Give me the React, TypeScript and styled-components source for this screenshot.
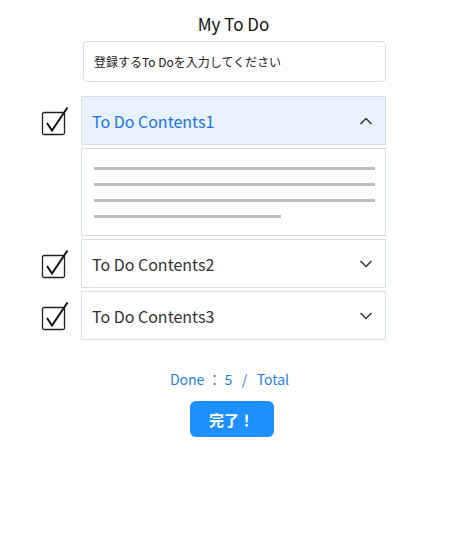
import React, { useState } from "react";
import styled, { createGlobalStyle } from "styled-components";

const GlobalStyle = createGlobalStyle`
    body {
        margin: 0;
        background: #fff;
        font-family: "Noto Sans CJK JP", "Noto Sans", sans-serif;
        color: #111;
    }
`;

const todos = [
    { id: 1, title: "To Do Contents1" },
    { id: 2, title: "To Do Contents2" },
    { id: 3, title: "To Do Contents3" },
];

function CheckIcon() {
    return (
        <svg width="30" height="30" viewBox="0 0 30 30">
            <rect x="1.5" y="6.5" width="22" height="22" rx="1.5" fill="#fff" stroke="#222" strokeWidth="1.3" />
            <path d="M6 17 L11 24.5 L26.5 1.5" fill="none" stroke="#111" strokeWidth="2" strokeLinejoin="miter" />
        </svg>
    );
}

function Chevron({ up }: { up: boolean }) {
    return (
        <svg width="14" height="8" viewBox="0 0 14 8">
            <path
                d={up ? "M1.5 7 L7 1.5 L12.5 7" : "M1.5 1 L7 6.5 L12.5 1"}
                fill="none"
                stroke="#333"
                strokeWidth="1.5"
            />
        </svg>
    );
}

function App() {
    const [open, setOpen] = useState<number | null>(1);
    return (
        <>
            <GlobalStyle />
            <Page>
                <Title>My To Do</Title>
                <Input placeholder="登録するTo Doを入力してください" />
                <List>
                    {todos.map((todo) => {
                        const isOpen = open === todo.id;
                        return (
                            <Row key={todo.id}>
                                <Check>
                                    <CheckIcon />
                                </Check>
                                <Item>
                                    <Header
                                        $open={isOpen}
                                        onClick={() => setOpen(isOpen ? null : todo.id)}
                                    >
                                        <span>{todo.title}</span>
                                        <Chevron up={isOpen} />
                                    </Header>
                                    {isOpen && (
                                        <Panel>
                                            <Line />
                                            <Line />
                                            <Line />
                                            <Line $short />
                                        </Panel>
                                    )}
                                </Item>
                                <div />
                            </Row>
                        );
                    })}
                </List>
                <Count>Done&nbsp;：&nbsp;5&nbsp;&nbsp;&nbsp;/&nbsp;&nbsp;&nbsp;Total</Count>
                <Button>完了！</Button>
            </Page>
        </>
    );
}

export default App;

const Page = styled.div`
    display: flex;
    flex-direction: column;
    align-items: center;
    padding: 12px 0 40px 10px;
`;

const Title = styled.h1`
    margin: 0;
    font-size: 17px;
    font-weight: 400;
    line-height: 24px;
    color: #111;
`;

const Input = styled.input`
    box-sizing: border-box;
    width: 303px;
    height: 41px;
    margin: 5px 0 0 2px;
    padding: 0 10px;
    border: 1px solid #d8dde5;
    border-radius: 4px;
    font-family: inherit;
    font-size: 12px;
    outline: none;
    &::placeholder {
        color: #222;
    }
`;

const List = styled.div`
    width: 100%;
    margin-top: 14px;
    display: flex;
    flex-direction: column;
    gap: 3px;
`;

const Row = styled.div`
    display: grid;
    grid-template-columns: 1fr 305px 1fr;
`;

const Check = styled.div`
    justify-self: end;
    margin: 10px 10px 0 0;
    height: 30px;
`;

const Item = styled.div`
    display: flex;
    flex-direction: column;
    gap: 3px;
`;

const Header = styled.div<{ $open: boolean }>`
    box-sizing: border-box;
    height: 49px;
    padding: 0 12px 0 10px;
    display: flex;
    align-items: center;
    justify-content: space-between;
    border: 1px solid #d6dee8;
    background: ${(p) => (p.$open ? "#e8f1fe" : "#fff")};
    color: ${(p) => (p.$open ? "#1a73e8" : "#333")};
    font-size: 16px;
    cursor: pointer;
`;

const Panel = styled.div`
    box-sizing: border-box;
    height: 88px;
    padding: 18px 10px 0 12px;
    border: 1px solid #d6dee8;
    display: flex;
    flex-direction: column;
    gap: 13px;
`;

const Line = styled.div<{ $short?: boolean }>`
    height: 3px;
    width: ${(p) => (p.$short ? "187px" : "281px")};
    background: #bcbcbc;
`;

const Count = styled.div`
    margin-top: 29px;
    margin-right: 8px;
    font-size: 14px;
    color: #1e7ee8;
    line-height: 20px;
`;

const Button = styled.button`
    margin: 12px 4px 0 0;
    width: 84px;
    height: 36px;
    border: none;
    border-radius: 6px;
    background: #1e90ff;
    color: #fff;
    font-family: inherit;
    font-size: 15px;
    font-weight: 700;
`;
